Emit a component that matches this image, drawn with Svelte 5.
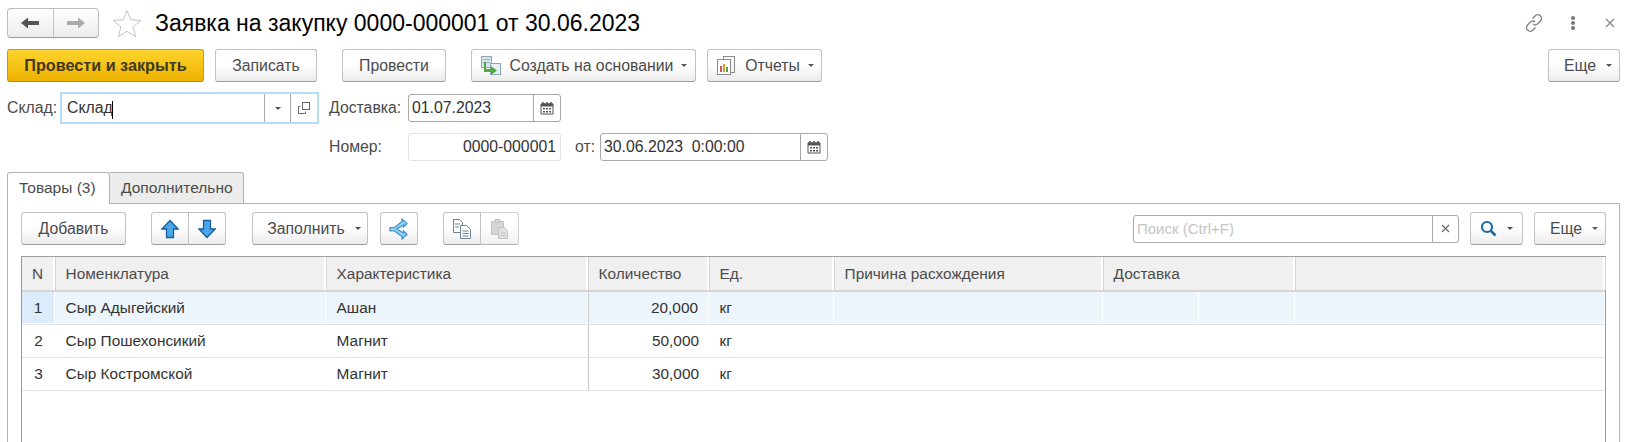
<script>
  const columns = [
    { title: 'N', width: 33, cls: 'center' },
    { title: 'Номенклатура', width: 271 },
    { title: 'Характеристика', width: 262 },
    { title: 'Количество', width: 121 },
    { title: 'Ед.', width: 125 },
    { title: 'Причина расхождения', width: 269 },
    { title: 'Доставка', width: 192 },
    { title: '', width: 310 }
  ];

  const rows = [
    { n: 1, name: 'Сыр Адыгейский', kind: 'Ашан', qty: '20,000', unit: 'кг' },
    { n: 2, name: 'Сыр Пошехонсикий', kind: 'Магнит', qty: '50,000', unit: 'кг' },
    { n: 3, name: 'Сыр Костромской', kind: 'Магнит', qty: '30,000', unit: 'кг' }
  ];

  const gridTemplate = columns.map((c) => c.width + 'px').join(' ');
</script>

{#snippet caret()}
  <span class="caret"></span>
{/snippet}

{#snippet calendar()}
  <svg class="cal" width="14" height="14" viewBox="0 0 14 14">
    <path d="M1 3h12v10H1z" fill="#fff" stroke="#555" stroke-width="1" />
    <path d="M1 2.500h12v3H1z" fill="#555" />
    <path d="M3 1v3M7 1v3M11 1v3" stroke="#555" stroke-width="1.500" />
    <path d="M3 7h2v1.500H3zM6 7h2v1.500H6zM9 7h2v1.500H9zM3 10h2v1.500H3zM6 10h2v1.500H6zM9 10h2v1.500H9z" fill="#555" />
  </svg>
{/snippet}

<div class="page">
  <header class="titlebar">
    <div class="nav">
      <span class="nav-part">
        <svg width="20" height="14" viewBox="0 0 20 14"><path d="M1 7l7-5.500V5h11v4H8v3.500z" fill="#555" /></svg>
      </span>
      <span class="nav-part">
        <svg width="20" height="14" viewBox="0 0 20 14"><path d="M19 7l-7-5.500V5H1v4h11v3.500z" fill="#aaa" /></svg>
      </span>
    </div>
    <svg class="star" width="30" height="29" viewBox="0 0 30 29">
      <path d="M15 1.500l3.800 9.300 10 .7-7.700 6.400 2.500 9.800L15 22.300l-8.600 5.400 2.500-9.800-7.700-6.400 10-.7z" fill="#fff" stroke="#c4c4c4" />
    </svg>
    <h1>Заявка на закупку 0000-000001 от 30.06.2023</h1>
    <div class="window-tools">
      <svg width="20" height="20" viewBox="0 0 20 20" fill="none" stroke="#888" stroke-width="1.500">
        <path d="M8.500 5.500l2.500-2.500a3.500 3.500 0 0 1 5.500 5l-3 3a3.500 3.500 0 0 1-4.500 0" />
        <path d="M11.500 14.500L9 17a3.500 3.500 0 0 1-5.500-5l3-3a3.500 3.500 0 0 1 4.500 0" />
      </svg>
      <svg class="dots" width="6" height="16" viewBox="0 0 6 16"><circle cx="3" cy="3" r="2" fill="#777" /><circle cx="3" cy="8" r="2" fill="#777" /><circle cx="3" cy="13" r="2" fill="#777" /></svg>
      <svg class="close" width="10" height="10" viewBox="0 0 10 10"><path d="M1 1l8 8M9 1l-8 8" stroke="#888" stroke-width="1.300" /></svg>
    </div>
  </header>

  <div class="toolbar main-bar">
    <button class="btn primary w-primary">Провести и закрыть</button>
    <button class="btn w-write">Записать</button>
    <button class="btn w-post">Провести</button>
    <button class="btn w-create">
      <svg width="22" height="22" viewBox="0 0 22 22">
        <rect x="1.500" y="1.500" width="10" height="11" fill="#d9e3ec" stroke="#8fa6b8" />
        <rect x="3" y="4" width="7" height="1" fill="#9fb2c2" /><rect x="3" y="7" width="7" height="1" fill="#9fb2c2" />
        <rect x="10.500" y="8.500" width="10" height="11" fill="#e8eff5" stroke="#8fa6b8" />
        <path d="M6 7v7h5v-3l6 4.500-6 4.500v-3H4v-10z" fill="#4cae3a" />
      </svg>
      <span>Создать на основании</span>{@render caret()}
    </button>
    <button class="btn w-reports">
      <svg width="22" height="22" viewBox="0 0 22 22">
        <rect x="8.500" y="1.500" width="11" height="16" fill="#f5f5f5" stroke="#8c8c8c" />
        <rect x="2.500" y="4.500" width="13" height="15" fill="#fff" stroke="#8c8c8c" />
        <rect x="5" y="11" width="2" height="6" fill="#d9534f" /><rect x="8" y="9" width="2" height="8" fill="#e59a2e" /><rect x="11" y="12" width="2" height="5" fill="#4cae3a" />
      </svg>
      <span>Отчеты</span>{@render caret()}
    </button>
    <button class="btn w-more push">Еще{@render caret()}</button>
  </div>

  <div class="form-row first">
    <label class="label w-sklad" for="sklad">Склад:</label>
    <div class="focus-box">
      <input id="sklad" value="Склад" readonly />
      <span class="caret-mark"></span>
      <span class="field-btn w-drop">{@render caret()}</span>
      <span class="field-btn w-open">
        <svg width="14" height="14" viewBox="0 0 14 14" fill="#fff" stroke="#666"><rect x="5.500" y="1.500" width="7" height="7" /><path d="M3.500 5.500h-2v7h7v-2" fill="none" /></svg>
      </span>
    </div>
    <span class="label w-dost">Доставка:</span>
    <div class="field w-date">
      <span class="value">01.07.2023</span>
      <span class="field-btn w-cal">{@render calendar()}</span>
    </div>
  </div>

  <div class="form-row second">
    <span class="label w-nom">Номер:</span>
    <div class="field readonly w-date"><span class="value right">0000-000001</span></div>
    <span class="label w-ot">от:</span>
    <div class="field w-datetime">
      <span class="value">30.06.2023 &nbsp;0:00:00</span>
      <span class="field-btn w-cal">{@render calendar()}</span>
    </div>
  </div>

  <div class="tabs">
    <span class="tab active">Товары (3)</span>
    <span class="tab">Дополнительно</span>
  </div>

  <section class="panel">
    <div class="toolbar table-bar">
      <button class="btn w-add">Добавить</button>
      <div class="btn-group w-arrows">
        <button class="btn">
          <svg width="18" height="20" viewBox="0 0 18 20"><path d="M9 1.500L17 10h-4.500v8.500h-7V10H1z" fill="#4aa8e8" stroke="#155f9a" stroke-width="1.300" /></svg>
        </button>
        <button class="btn">
          <svg width="18" height="20" viewBox="0 0 18 20"><path d="M9 18.500L1 10h4.500V1.500h7V10H17z" fill="#4aa8e8" stroke="#155f9a" stroke-width="1.300" /></svg>
        </button>
      </div>
      <button class="btn w-fill"><span>Заполнить</span>{@render caret()}</button>
      <button class="btn w-merge">
        <svg width="20" height="22" viewBox="0 0 20 22" fill="none" stroke="#3f8fc4" stroke-width="1.200">
          <path d="M1 9.500h4.500L13 3.500V1l5 4.500-3.500 3.500V7L8 11l6.500 4v-2l3.500 3.500L13 21v-2.500L5.500 13H1z" fill="#8fd0f5" />
        </svg>
      </button>
      <div class="btn-group w-copy">
        <button class="btn">
          <svg width="20" height="22" viewBox="0 0 20 22" fill="#fff" stroke="#6f8191">
            <path d="M1.500 1.500h6l3 3v10h-9z" /><path d="M8.500 7.500h6l4 4v9h-10z" />
            <path d="M3 6h5M3 9h4M10.500 13h6M10.500 15.500h6M10.500 18h6" />
          </svg>
        </button>
        <button class="btn off">
          <svg width="20" height="22" viewBox="0 0 20 22" fill="#c9c9c9" stroke="#b0b0b0">
            <path d="M1.500 3.500h12v13h-12z" /><path d="M5 1.500h5v3H5z" /><path d="M8.500 9.500h6l3 3v8h-9z" fill="#d8d8d8" />
            <path d="M10.500 15h5M10.500 17.500h5" />
          </svg>
        </button>
      </div>
      <div class="search push">
        <span class="placeholder">Поиск (Ctrl+F)</span>
        <span class="field-btn w-clear">
          <svg width="9" height="9" viewBox="0 0 9 9"><path d="M1 1l7 7M8 1L1 8" stroke="#666" stroke-width="1.100" /></svg>
        </span>
      </div>
      <button class="btn w-find">
        <svg width="17" height="17" viewBox="0 0 17 17" fill="none" stroke="#1f6aa5" stroke-width="2.200"><circle cx="7" cy="7" r="5" /><path d="M10.500 10.500l5 5" stroke-width="2.600" /></svg>
        {@render caret()}
      </button>
      <button class="btn w-more2">Еще{@render caret()}</button>
    </div>

    <div class="table">
      <div class="thead" style="grid-template-columns: {gridTemplate}">
        {#each columns as col}
          <div class="th {col.cls ?? ''}">{col.title}</div>
        {/each}
      </div>
      {#each rows as row, i}
        <div class="tr" class:selected={i === 0} style="grid-template-columns: {gridTemplate}">
          <div class="td center num">{row.n}</div>
          <div class="td">{row.name}</div>
          <div class="td">{row.kind}</div>
          <div class="td right qty">{row.qty}</div>
          <div class="td">{row.unit}</div>
          <div class="td"></div>
          <div class="td split"><span></span><span></span></div>
          <div class="td"></div>
        </div>
      {/each}
    </div>
  </section>
</div>

<style>
  :global(body) {
    margin: 0;
    background: #fff;
  }

  .page {
    width: 1637px;
    height: 442px;
    overflow: hidden;
    box-sizing: border-box;
    padding: 8px 17px 0 7px;
    font-family: "Liberation Sans", Arial, sans-serif;
    font-size: 15.800px;
    color: #4b4b4b;
  }

  .titlebar {
    display: flex;
    align-items: center;
    height: 30px;
  }

  .nav {
    display: flex;
    width: 92px;
    height: 30px;
    box-sizing: border-box;
    border: 1px solid #bdbdbd;
    border-bottom-color: #9a9a9a;
    border-radius: 4px;
    background: linear-gradient(#fff, #ececec);
  }

  .nav-part {
    flex: 1;
    display: flex;
    align-items: center;
    justify-content: center;
  }

  .nav-part + .nav-part {
    border-left: 1px solid #c4c4c4;
  }

  .star {
    margin-left: 13px;
  }

  h1 {
    margin: 0 0 0 13px;
    font-size: 23px;
    font-weight: 400;
    color: #000;
  }

  .window-tools {
    margin-left: auto;
    display: flex;
    align-items: center;
    margin-right: 1px;
  }

  .dots {
    margin-left: 26px;
  }

  .close {
    margin-left: 29px;
    margin-right: 4px;
  }

  .toolbar {
    display: flex;
    align-items: center;
  }

  .main-bar {
    margin-top: 11px;
    height: 33px;
  }

  .btn {
    height: 33px;
    box-sizing: border-box;
    display: inline-flex;
    align-items: center;
    justify-content: center;
    gap: 0;
    padding: 0;
    border: 1px solid #c2c2c2;
    border-bottom-color: #9c9c9c;
    border-radius: 3px;
    background: linear-gradient(#fff 45%, #ececec);
    color: #4b4b4b;
    font: inherit;
    white-space: nowrap;
  }

  .primary {
    border-color: #c79a10;
    border-bottom-color: #b58a08;
    background: linear-gradient(#ffd42e, #edb200);
    font-weight: 700;
    font-size: 16.200px;
    color: #40391f;
  }

  .caret {
    display: inline-block;
    width: 0;
    height: 0;
    margin-left: 10px;
    border: 3px solid transparent;
    border-top: 3px solid #555;
    border-bottom: 0;
  }

  .push {
    margin-left: auto;
  }

  .w-primary { width: 197px; }
  .w-write { width: 102px; margin-left: 11px; }
  .w-post { width: 104px; margin-left: 25px; }
  .w-create { width: 225px; margin-left: 25px; }
  .w-create span { margin-left: 8px; }
  .w-reports { width: 115px; margin-left: 11px; }
  .w-reports span { margin-left: 8px; }
  .w-more { width: 72px; padding-left: 8px; }

  .form-row {
    display: flex;
    align-items: center;
  }

  .first {
    margin-top: 10px;
    height: 32px;
  }

  .second {
    margin-top: 9px;
    height: 28px;
  }

  .label { white-space: nowrap; }
  .w-sklad { width: 53px; }
  .w-dost { width: 79px; margin-left: 10px; }
  .w-nom { width: 79px; margin-left: 322px; }
  .w-ot { width: 25px; margin-left: 14px; }

  .focus-box {
    position: relative;
    width: 259px;
    height: 32px;
    box-sizing: border-box;
    display: flex;
    border: 2px solid #b9dcf5;
    background: #fff;
  }

  .focus-box input {
    flex: 1;
    width: 0;
    border: 0;
    outline: 0;
    padding: 0 0 0 5px;
    font: inherit;
    color: #333;
    background: transparent;
  }

  .caret-mark {
    position: absolute;
    left: 50px;
    top: 7px;
    width: 1px;
    height: 18px;
    background: #000;
  }

  .field-btn {
    display: flex;
    align-items: center;
    justify-content: center;
    box-sizing: border-box;
    border-left: 1px solid #a8a8a8;
  }

  .field-btn .caret { margin: 0; }
  .w-drop { width: 26px; }
  .w-open { width: 27px; }
  .w-cal { width: 27px; }
  .w-clear { width: 26px; }

  .field {
    display: flex;
    height: 28px;
    box-sizing: border-box;
    border: 1px solid #a8a8a8;
    border-radius: 3px;
    background: #fff;
    color: #333;
  }

  .field.readonly {
    border-color: #e2e2e2;
  }

  .value {
    flex: 1;
    padding: 0 4px 0 3px;
    line-height: 26px;
    white-space: pre;
  }

  .value.right {
    text-align: right;
  }

  .w-date { width: 153px; }
  .w-datetime { width: 228px; }

  .tabs {
    display: flex;
    margin-top: 11px;
    height: 31px;
    font-size: 15.500px;
  }

  .tab {
    box-sizing: border-box;
    height: 32px;
    padding: 0 11px;
    line-height: 30px;
    border: 1px solid #b3b3b3;
    border-left: 0;
    border-radius: 0 3px 0 0;
    background: #ececec;
  }

  .tab.active {
    width: 103px;
    padding: 0 0 0 11px;
    border-left: 1px solid #b3b3b3;
    border-right: 1px solid #b3b3b3;
    border-bottom: 0;
    border-radius: 3px 3px 0 0;
    background: #fff;
    position: relative;
    z-index: 1;
  }

  .tab:not(.active) {
    width: 134px;
    color: #4b4b4b;
  }

  .panel {
    box-sizing: border-box;
    height: 240px;
    border: 1px solid #b3b3b3;
    padding: 8px 13px 0;
  }

  .table-bar {
    height: 33px;
  }

  .w-add { width: 105px; }
  .btn-group {
    display: flex;
    margin-left: 25px;
  }

  .btn-group .btn:first-child {
    border-radius: 3px 0 0 3px;
  }

  .btn-group .btn:last-child {
    border-left: 0;
    border-radius: 0 3px 3px 0;
  }

  .w-arrows .btn { width: 38px; }
  .w-arrows .btn:last-child { width: 37px; }
  .w-fill { width: 116px; margin-left: 26px; padding-left: 8px; }
  .w-merge { width: 38px; margin-left: 12px; }
  .w-copy .btn { width: 38px; }
  .off { opacity: .75; }

  .search {
    display: flex;
    width: 326px;
    height: 28px;
    box-sizing: border-box;
    border: 1px solid #a8a8a8;
    border-radius: 3px;
    font-size: 15px;
  }

  .placeholder {
    flex: 1;
    padding-left: 3px;
    line-height: 26px;
    color: #c4c4c4;
  }

  .w-find { width: 53px; margin-left: 11px; }
  .w-more2 { width: 72px; margin-left: 11px; padding-left: 8px; }

  .table {
    margin-top: 11px;
    width: 1585px;
    height: 200px;
    box-sizing: border-box;
    border-left: 1px solid #999;
    border-right: 1px solid #999;
    border-top: 1px solid #a0a0a0;
    color: #333;
    font-size: 15.400px;
  }

  .thead {
    display: grid;
    height: 35px;
    background: #f0f0f0;
    border-bottom: 2px solid #d4d4d4;
    box-sizing: border-box;
    color: #4b4b4b;
  }

  .th {
    box-sizing: border-box;
    padding-left: 10.600px;
    line-height: 33px;
    border-right: 2px solid #fff;
    box-shadow: 1px 0 0 #d4d4d4;
  }

  .th.center,
  .td.center {
    padding: 0;
    text-align: center;
  }

  .tr {
    display: grid;
    height: 33px;
    box-sizing: border-box;
    border-bottom: 1px solid #e2e2e2;
  }

  .td {
    box-sizing: border-box;
    padding-left: 10.600px;
    line-height: 32px;
  }

  .td.right {
    padding: 0 10px 0 0;
    text-align: right;
  }

  .qty {
    border-left: 1px solid #c8c8c8;
  }

  .selected .td {
    align-self: start;
    height: 31px;
    background: #edf5fc;
    border-right: 1px solid #fff;
  }

  .selected .td.qty {
    height: 32px;
    background: linear-gradient(#edf5fc 31px, #fff 31px);
  }

  .selected .td.num {
    background: #dcecfa;
  }

  .split {
    display: flex;
    padding: 0;
  }

  .split span {
    flex: 1;
  }

  .selected .split span:first-child {
    border-right: 1px solid #fff;
  }
</style>
